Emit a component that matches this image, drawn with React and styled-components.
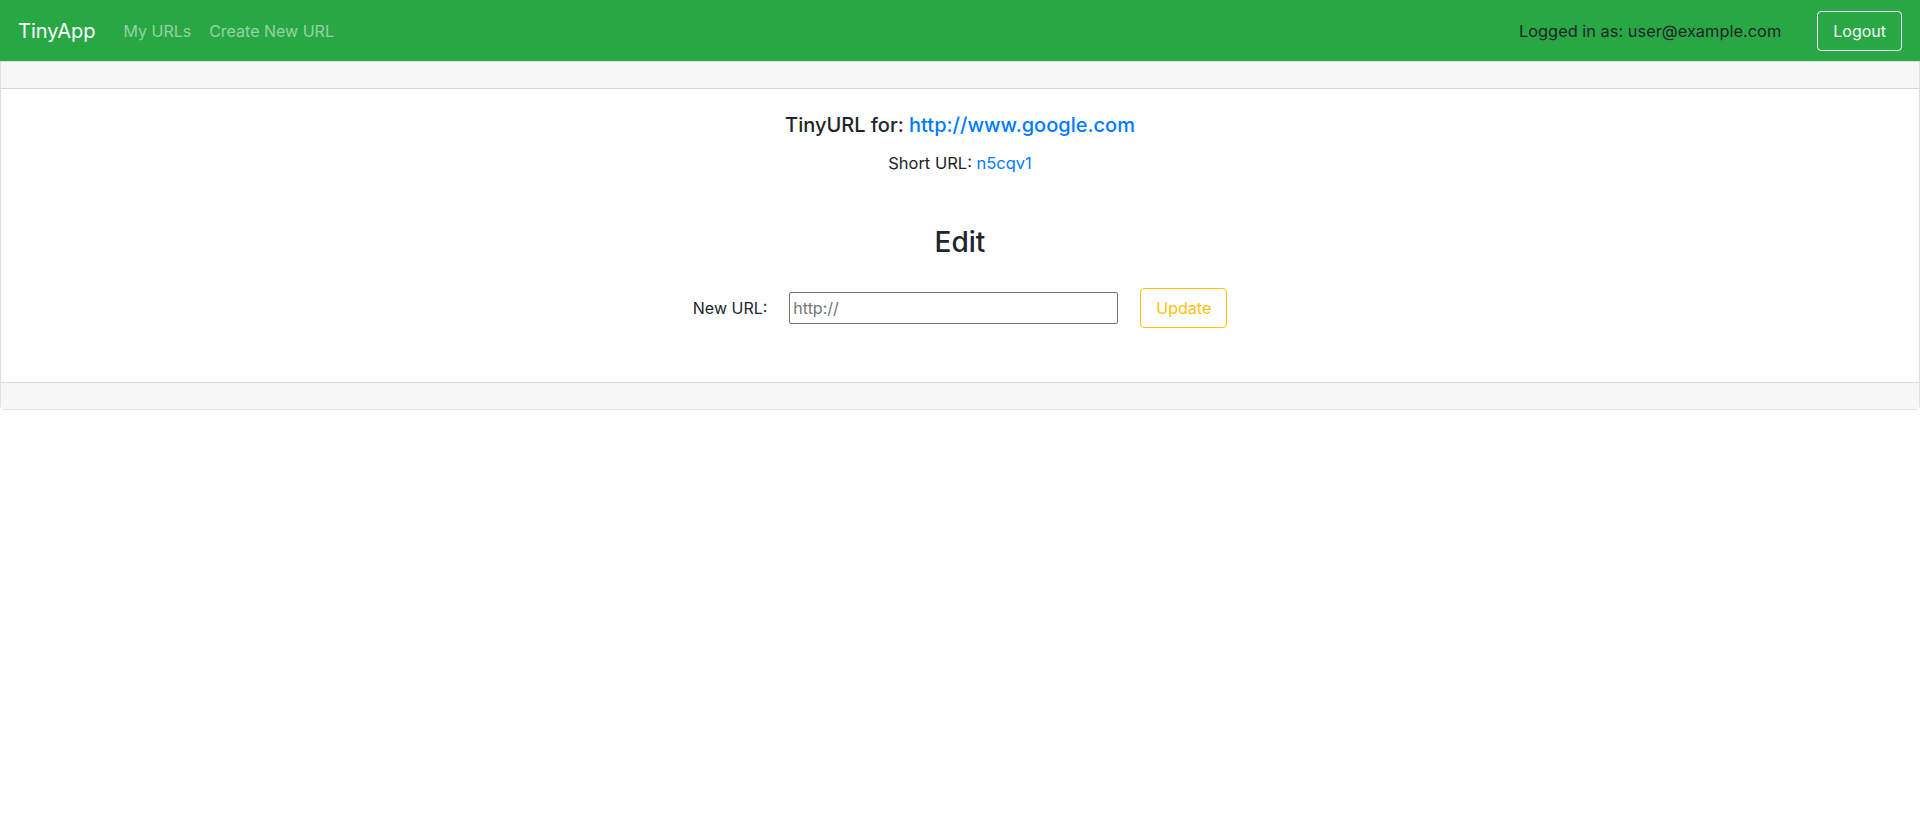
import styled, { createGlobalStyle } from "styled-components";

const GlobalStyle = createGlobalStyle`
  body {
    margin: 0;
    font-family: Inter, "Liberation Sans", sans-serif;
    font-size: 16px;
    color: #212529;
    background: #fff;
  }
`;

const Navbar = styled.nav`
  display: flex;
  align-items: center;
  height: 61px;
  padding: 0 18px;
  background-color: #28a745;
  box-sizing: border-box;
`;

const Brand = styled.a`
  color: #fff;
  font-size: 20px;
  margin-right: 20px;
  text-decoration: none;
`;

const NavLink = styled.a`
  color: rgba(255, 255, 255, 0.5);
  font-size: 16px;
  padding: 0 8px;
  text-decoration: none;
  & + & {
    margin-left: 2px;
  }
`;

const NavRight = styled.div`
  margin-left: auto;
  display: flex;
  align-items: center;
  gap: 36px;
`;

const LoggedIn = styled.span`
  color: #212529;
  font-size: 16.4px;
`;

const OutlineButton = styled.button`
  font-family: inherit;
  font-size: 16px;
  height: 40px;
  padding: 0 15px;
  border-radius: 4px;
  background: transparent;
  color: ${(p) => p.$color};
  border: 1px solid ${(p) => p.$color};
  cursor: pointer;
`;

const Card = styled.section`
  border: 1px solid rgba(0, 0, 0, 0.125);
  border-radius: 0 0 4px 4px;
`;

const CardBar = styled.div`
  height: 26px;
  background: #f7f7f7;
  border-${(p) => (p.$bottom ? "top" : "bottom")}: 1px solid rgba(0, 0, 0, 0.125);
`;

const CardBody = styled.div`
  display: flex;
  flex-direction: column;
  align-items: center;
  padding: 24px 20px 54px;
`;

const Title = styled.h5`
  margin: 0 0 14px;
  font-size: 20px;
  font-weight: 500;
  line-height: 1.2;
`;

const Link = styled.a`
  color: #007bff;
  text-decoration: none;
`;

const ShortLine = styled.p`
  margin: 0;
  font-size: 16.5px;
  line-height: 1.5;
`;

const EditHeading = styled.h3`
  margin: 50px 0 29px;
  font-size: 28px;
  font-weight: 500;
  line-height: 1.2;
`;

const Form = styled.form`
  display: flex;
  align-items: center;
`;

const Label = styled.label`
  margin-right: 22px;
`;

const Input = styled.input`
  width: 329px;
  height: 32px;
  box-sizing: border-box;
  margin-right: 22px;
  border: 1px solid #767676;
  border-radius: 2px;
  padding: 0 3px;
  font-family: inherit;
  font-size: 16px;
  &::placeholder {
    color: #757575;
  }
`;

export default function App() {
  return (
    <>
      <GlobalStyle />
      <Navbar>
        <Brand href="#">TinyApp</Brand>
        <NavLink href="#">My URLs</NavLink>
        <NavLink href="#">Create New URL</NavLink>
        <NavRight>
          <LoggedIn>Logged in as: user@example.com</LoggedIn>
          <OutlineButton $color="#f8f9fa">Logout</OutlineButton>
        </NavRight>
      </Navbar>
      <Card>
        <CardBar />
        <CardBody>
          <Title>
            TinyURL for: <Link href="#">http://www.google.com</Link>
          </Title>
          <ShortLine>
            Short URL: <Link href="#">n5cqv1</Link>
          </ShortLine>
          <EditHeading>Edit</EditHeading>
          <Form onSubmit={(e) => e.preventDefault()}>
            <Label htmlFor="longURL">New URL:</Label>
            <Input id="longURL" type="text" placeholder="http://" />
            <OutlineButton $color="#ffc107" type="submit">
              Update
            </OutlineButton>
          </Form>
        </CardBody>
        <CardBar $bottom />
      </Card>
    </>
  );
}
